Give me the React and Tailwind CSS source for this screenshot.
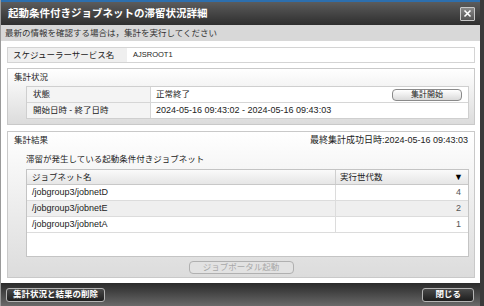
const FONT = { fontFamily: '"Liberation Sans", "Noto Sans CJK JP", sans-serif' };

const ROWS = [
  { name: '/jobgroup3/jobnetD', count: 4 },
  { name: '/jobgroup3/jobnetE', count: 2 },
  { name: '/jobgroup3/jobnetA', count: 1 },
];

function FooterButton({ children }) {
  return (
    <button className="h-[14px] px-[6px] rounded-[3px] border border-[#b5b5b5] bg-gradient-to-b from-[#4a4a4a] to-[#1e1e1e] text-white font-bold text-[8.5px] leading-none">
      {children}
    </button>
  );
}

export default function App() {
  return (
    <div
      className="w-[484px] h-[306px] flex flex-col bg-white border-l border-[#9a9a9a] border-r-[4px] border-r-[#3a3a3a] text-[#222] text-[8.5px] leading-none overflow-hidden"
      style={FONT}
    >
      {/* Title bar */}
      <div className="h-[25px] shrink-0 flex items-center justify-between pl-[7px] pr-[5px] border-t-2 border-[#2d6fae] bg-gradient-to-b from-[#5c5c5c] to-[#2f2f2f]">
        <span className="text-white text-[10.5px] font-bold">
          起動条件付きジョブネットの滞留状況詳細
        </span>
        <div className="w-[15px] h-[14px] flex items-center justify-center border border-[#c8c8c8] bg-gradient-to-b from-[#8a8a8a] to-[#555] rounded-[1px]">
          <svg width="9" height="9" viewBox="0 0 9 9">
            <path d="M1.5 1.5 L7.5 7.5 M7.5 1.5 L1.5 7.5" stroke="#fff" strokeWidth="1.6" />
          </svg>
        </div>
      </div>

      {/* Info bar */}
      <div className="h-[16px] shrink-0 flex items-center pl-[4px] bg-[#d8d8d8] text-[#333]">
        最新の情報を確認する場合は，集計を実行してください
      </div>

      {/* Body */}
      <div className="flex-1 flex flex-col pt-[6px] pl-[6px] pr-[5px] pb-[5px] gap-[5px]">
        {/* Scheduler service */}
        <div className="h-[16px] flex border border-[#d4d4d4]">
          <div className="w-[119px] flex items-center pl-[5px] bg-[#efefef] text-[8.5px]">
            スケジューラーサービス名
          </div>
          <div className="flex-1 flex items-center pl-[6px] text-[7.5px]">AJSROOT1</div>
        </div>

        {/* Aggregation status */}
        <div className="h-[57px] flex flex-col border border-[#c9c9c9] bg-gradient-to-b from-white to-[#dcdcdc]">
          <div className="h-[17px] flex items-center pl-[6px]">集計状況</div>
          <div className="ml-[18px] mr-[5px] border border-[#cfcfcf] bg-white">
            <div className="h-[16px] flex border-b border-[#d6d6d6]">
              <div className="w-[124px] flex items-center pl-[6px] bg-[#f4f4f4] border-r border-[#d6d6d6]">状態</div>
              <div className="flex-1 flex items-center justify-between pl-[5px] pr-[6px]">
                <span>正常終了</span>
                <button className="w-[70px] h-[12px] rounded-[4px] border border-[#8a8a8a] bg-gradient-to-b from-white to-[#dadada] text-[8px] text-[#222] leading-none">
                  集計開始
                </button>
              </div>
            </div>
            <div className="h-[15px] flex">
              <div className="w-[124px] flex items-center pl-[6px] bg-[#f4f4f4] border-r border-[#d6d6d6]">開始日時 - 終了日時</div>
              <div className="flex-1 flex items-center pl-[5px] text-[9px]">
                2024-05-16 09:43:02 - 2024-05-16 09:43:03
              </div>
            </div>
          </div>
        </div>

        {/* Aggregation result */}
        <div className="flex-1 flex flex-col border border-[#c9c9c9] bg-gradient-to-b from-white to-[#dcdcdc] mt-[1px]">
          <div className="h-[17px] flex items-center justify-between pl-[6px] pr-[6px]">
            <span>集計結果</span>
            <span className="text-[9px]">最終集計成功日時:2024-05-16 09:43:03</span>
          </div>
          <div className="h-[20px] flex items-center pl-[18px]">
            滞留が発生している起動条件付きジョブネット
          </div>
          <div className="ml-[18px] mr-[5px] h-[88px] flex flex-col border border-[#c4c4c4] bg-white">
            <div className="h-[15px] shrink-0 flex border-b border-[#c8c8c8] bg-gradient-to-b from-[#fafafa] to-[#e6e6e6]">
              <div className="flex-1 flex items-center pl-[5px] border-r border-[#cfcfcf]">ジョブネット名</div>
              <div className="w-[132px] flex items-center justify-between pl-[4px] pr-[5px]">
                <span>実行世代数</span>
                <span className="text-[9px] text-black">▼</span>
              </div>
            </div>
            {ROWS.map((row, i) => (
              <div
                key={row.name}
                className={`h-[16px] shrink-0 flex border-b border-[#dcdcdc] text-[9px] ${i === 1 ? 'bg-[#efefef]' : 'bg-white'}`}
              >
                <div className="flex-1 flex items-center pl-[5px] border-r border-[#dcdcdc]">{row.name}</div>
                <div className="w-[132px] flex items-center justify-end pr-[7px] text-[#555]">{row.count}</div>
              </div>
            ))}
          </div>
          <div className="flex-1 flex items-center justify-center">
            <button className="w-[105px] h-[13px] rounded-[4px] border border-[#b0b0b0] bg-[#e2e2e2] text-[#a8a8a8] text-[8.5px] leading-none">
              ジョブポータル起動
            </button>
          </div>
        </div>
      </div>

      {/* Footer */}
      <div className="h-[23px] shrink-0 flex items-center justify-between pl-[5px] pr-[6px] bg-gradient-to-b from-[#2b2b2b] to-[#6a6a6a]">
        <FooterButton>集計状況と結果の削除</FooterButton>
        <FooterButton>
          <span className="px-[6px]">閉じる</span>
        </FooterButton>
      </div>
    </div>
  );
}
